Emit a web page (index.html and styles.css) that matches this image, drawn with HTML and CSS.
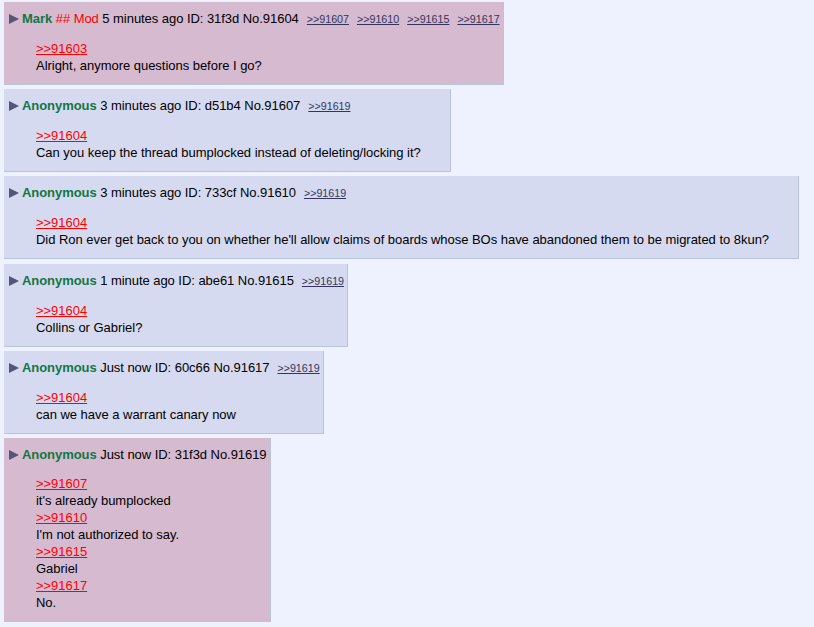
FILE: index.html
```html
<!DOCTYPE html>
<html lang="en">
<head>
  <meta charset="UTF-8" />
  <title>Thread</title>
  <link rel="stylesheet" href="styles.css">
</head>
<body>
  <div class="thread">
    <div class="post own">
      <div class="intro">
        <svg class="menu" width="10" height="10" viewBox="0 0 10 10"><polygon points="0,0 10,5 0,10" /></svg><span class="name">Mark</span> <span class="capcode">## Mod</span> 5 minutes ago ID: 31f3d No.91604<span class="mentioned"><a href="#">&gt;&gt;91607</a><a href="#">&gt;&gt;91610</a><a href="#">&gt;&gt;91615</a><a href="#">&gt;&gt;91617</a></span>
      </div>
      <div class="body">
        <a class="quote" href="#">&gt;&gt;91603</a><br>
        Alright, anymore questions before I go?
      </div>
    </div>

    <div class="post">
      <div class="intro">
        <svg class="menu" width="10" height="10" viewBox="0 0 10 10"><polygon points="0,0 10,5 0,10" /></svg><span class="name">Anonymous</span> 3 minutes ago ID: d51b4 No.91607<span class="mentioned"><a href="#">&gt;&gt;91619</a></span>
      </div>
      <div class="body">
        <a class="quote" href="#">&gt;&gt;91604</a><br>
        Can you keep the thread bumplocked instead of deleting/locking it?
      </div>
    </div>

    <div class="post">
      <div class="intro">
        <svg class="menu" width="10" height="10" viewBox="0 0 10 10"><polygon points="0,0 10,5 0,10" /></svg><span class="name">Anonymous</span> 3 minutes ago ID: 733cf No.91610<span class="mentioned"><a href="#">&gt;&gt;91619</a></span>
      </div>
      <div class="body">
        <a class="quote" href="#">&gt;&gt;91604</a><br>
        Did Ron ever get back to you on whether he'll allow claims of boards whose BOs have abandoned them to be migrated to 8kun?
      </div>
    </div>

    <div class="post">
      <div class="intro">
        <svg class="menu" width="10" height="10" viewBox="0 0 10 10"><polygon points="0,0 10,5 0,10" /></svg><span class="name">Anonymous</span> 1 minute ago ID: abe61 No.91615<span class="mentioned"><a href="#">&gt;&gt;91619</a></span>
      </div>
      <div class="body">
        <a class="quote" href="#">&gt;&gt;91604</a><br>
        Collins or Gabriel?
      </div>
    </div>

    <div class="post">
      <div class="intro">
        <svg class="menu" width="10" height="10" viewBox="0 0 10 10"><polygon points="0,0 10,5 0,10" /></svg><span class="name">Anonymous</span> Just now ID: 60c66 No.91617<span class="mentioned"><a href="#">&gt;&gt;91619</a></span>
      </div>
      <div class="body">
        <a class="quote" href="#">&gt;&gt;91604</a><br>
        can we have a warrant canary now
      </div>
    </div>

    <div class="post own">
      <div class="intro">
        <svg class="menu" width="10" height="10" viewBox="0 0 10 10"><polygon points="0,0 10,5 0,10" /></svg><span class="name">Anonymous</span> Just now ID: 31f3d No.91619
      </div>
      <div class="body">
        <a class="quote" href="#">&gt;&gt;91607</a><br>
        it's already bumplocked<br>
        <a class="quote" href="#">&gt;&gt;91610</a><br>
        I'm not authorized to say.<br>
        <a class="quote" href="#">&gt;&gt;91615</a><br>
        Gabriel<br>
        <a class="quote" href="#">&gt;&gt;91617</a><br>
        No.
      </div>
    </div>
  </div>
</body>
</html>
```

FILE: styles.css
```css
body {
  margin: 0;
  background: #eef2ff;
  font-family: "Liberation Sans", Arial, sans-serif;
  font-size: 13px;
  color: #000;
}
.thread {
  display: flex;
  flex-direction: column;
  align-items: flex-start;
  gap: 4.2px;
  padding: 2px 0 0 4px;
}
.post {
  background: #d6daf0;
  border-right: 1px solid #b7c5d9;
  border-bottom: 1px solid #b7c5d9;
  padding: 8px 3px 10px 5px;
}
.post.own {
  background: #d6bad0;
}
.intro {
  line-height: 17px;
  white-space: nowrap;
  letter-spacing: -0.05px;
}
.menu {
  fill: #555577;
  vertical-align: -1px;
  margin-right: 3px;
}
.name {
  color: #117743;
  font-weight: bold;
}
.capcode {
  color: #f00;
}
.mentioned a {
  color: #34345c;
  font-size: 10.7px;
  margin-left: 8px;
  letter-spacing: 0;
}
.body {
  margin: 12px 26px 0 27px;
  line-height: 17px;
  white-space: nowrap;
  letter-spacing: -0.03px;
}
.quote {
  color: #f00;
}
```
